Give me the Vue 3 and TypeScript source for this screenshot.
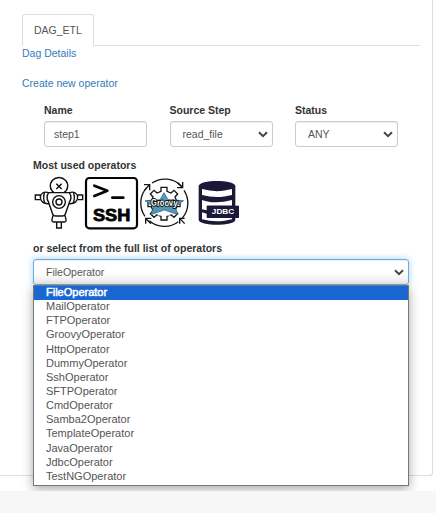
<script setup lang="ts">
import { ref } from 'vue'

const name = ref('step1')
const operator = ref('FileOperator')
const selects = [
  { label: 'Source Step', value: 'read_file' },
  { label: 'Status', value: 'ANY' },
]
const operators: string[] = [
  'FileOperator', 'MailOperator', 'FTPOperator', 'GroovyOperator', 'HttpOperator',
  'DummyOperator', 'SshOperator', 'SFTPOperator', 'CmdOperator', 'Samba2Operator',
  'TemplateOperator', 'JavaOperator', 'JdbcOperator', 'TestNGOperator',
]
</script>

<template>
  <div class="page">
    <main class="card">
      <nav class="tabs"><a class="tab">DAG_ETL</a></nav>
      <a class="link">Dag Details</a>
      <a class="link create">Create new operator</a>

      <div class="fields">
        <label class="field">
          <b>Name</b>
          <input v-model="name" class="control" type="text" />
        </label>
        <div v-for="s in selects" :key="s.label" class="field">
          <b>{{ s.label }}</b>
          <div class="control select">
            <span>{{ s.value }}</span>
            <svg class="chevron" viewBox="0 0 10 7"><path d="M1 1.3 5 5.1 9 1.3" /></svg>
          </div>
        </div>
      </div>

      <section class="operators">
        <b class="heading">Most used operators</b>
        <div class="icons">
          <svg class="icon" viewBox="9 15 159 159" fill="none" stroke="#111" stroke-width="4.2">
            <path d="M72 62a26 25 0 1 1 30 0" />
            <path d="m79 35 16 16M95 35 79 51" />
            <path d="M54 62H121M56 62c-6 9-6 19-1 27l13 37q2 6 8 6h22q6 0 8-6l13-37c5-8 5-18-1-27" />
            <circle cx="87" cy="90" r="19" />
            <circle cx="87" cy="90" r="9" />
            <path d="M56 62C41 57 31 65 31 76s10 21 26 19M118 62c15-5 25 3 25 14s-10 21-26 19" />
            <path d="M31 69H16v14h15M143 69h15v14h-15M44 61q-6 15 0 33M130 61q6 15 0 33" />
            <path d="m70 128-4 14q-1 8 6 8h30q7 0 6-8l-4-14M80 150v18h14v-18" />
          </svg>

          <svg class="icon" viewBox="9 15 159 159" fill="none" stroke="#050505" stroke-linecap="round" stroke-linejoin="round">
            <rect x="12" y="18" width="153" height="151" rx="10" stroke-width="6.5" />
            <path d="m37 41 39 15-39 16M91 77h33" stroke-width="8" />
            <text class="ssh" x="89" y="146" text-anchor="middle" textLength="112" lengthAdjust="spacingAndGlyphs">SSH</text>
          </svg>

          <svg class="icon" viewBox="9 15 159 159" fill="none" stroke="#151515" stroke-width="4">
            <path d="M51 33A69 69 0 0 1 139 42M147 55A69 69 0 0 1 142 138M130 149A69 69 0 0 1 43 146M30 133A69 69 0 0 1 35 47" />
            <path d="M27 38h17v17M43 39 28 55M143 30v17h-17M142 46 127 32M149 139h-15v16M135 140l14 15M32 155v-16h17M33 140l15 15" />
            <path d="M78 58V46h18v12l12 5 9-8 11 11-8 9 5 12h10v17h-10l-5 12 8 9-11 11-9-8-12 5v11H78v-11l-12-5-9 8-11-11 8-9-5-12H39V87h10l5-12-8-9 11-11 9 8z" />
            <path d="m87 62 12 21 47 3-26 19 9 23-41-14-41 14 9-23-26-19 45-3z" fill="#5298ba" stroke="#245f7c" stroke-width="2" />
            <path d="M66 128q21-15 42 0l-6 3q-15-6-30 0z" fill="#fff" stroke="none" />
            <text class="groovy" x="88" y="102" text-anchor="middle" textLength="78" lengthAdjust="spacingAndGlyphs" rotate="-5 4 -4 4 -3 5">Groovy</text>
          </svg>

          <svg class="icon" viewBox="3 15 159 159">
            <path d="M26 43c0-21 110-21 110 0v100c0 20-110 20-110 0z" fill="#1b1838" />
            <g fill="#fff">
              <path d="M36 51q45 13 90 0v18q-45 12-90 0zM36 84q10 4 20 5v12H50v14q-7-1-14-3zM36 121q7 3 14 4v12h76v5q-45 12-90 0z" />
              <path d="M54 89q36 5 72-5v17H54z" />
            </g>
            <path d="M52 101h95v37H52z" fill="#1b1838" />
            <text class="jdbc" x="99" y="126" text-anchor="middle" textLength="67" lengthAdjust="spacingAndGlyphs">JDBC</text>
          </svg>
        </div>

        <b class="heading full">or select from the full list of operators</b>
        <div class="combo">
          <div class="control select focused">
            <span>{{ operator }}</span>
            <svg class="chevron" viewBox="0 0 10 7"><path d="M1 1.3 5 5.1 9 1.3" /></svg>
          </div>
          <ul class="menu">
            <li v-for="o in operators" :key="o" :class="{ active: o === operator }" @click="operator = o">{{ o }}</li>
          </ul>
        </div>
      </section>
    </main>
  </div>
</template>

<style>
body {
  background: #f7f7f7;
  overflow: hidden;
}
</style>

<style scoped>
.page {
  box-sizing: border-box;
  height: 491px;
  padding-right: 3px;
  background: #fff;
  font: 10.5px/15px "Liberation Sans", Arial, sans-serif;
  color: #333;
}
.card {
  box-sizing: border-box;
  height: 476px;
  padding: 14px 12px 0 22px;
  border: solid #ddd;
  border-width: 0 1px 1px 0;
  border-radius: 0 0 3px 0;
}
.tabs {
  display: flex;
  height: 31px;
  border-bottom: 1px solid #ddd;
}
.tab {
  box-sizing: border-box;
  width: 72px;
  height: 32px;
  padding: 8px 0 0 11px;
  border: 1px solid #ddd;
  border-bottom: 0;
  border-radius: 3px 3px 0 0;
  background: #fff;
  color: #555;
}
.link {
  display: block;
  color: #337ab7;
}
.create {
  margin-top: 15px;
}
.fields {
  display: flex;
  gap: 22.5px;
  margin: 12px 0 0 22px;
}
.field {
  display: flex;
  flex-direction: column;
  gap: 3px;
  width: 103px;
}
.control {
  box-sizing: border-box;
  width: 100%;
  height: 26px;
  padding: 0 9px;
  border: 1px solid #ccc;
  border-radius: 3px;
  background: #fff;
  box-shadow: inset 0 1px 1px rgba(0, 0, 0, 0.075);
  color: #555;
  font: inherit;
  outline: none;
}
.select {
  display: flex;
  align-items: center;
  justify-content: space-between;
  padding: 0 4px 0 12px;
}
.chevron {
  width: 10px;
  height: 7px;
  fill: none;
  stroke: #444;
  stroke-width: 2;
}
.operators {
  margin: 11px 11px 0;
}
.heading {
  display: block;
}
.icons {
  display: flex;
  height: 53px;
  margin-top: 4px;
}
.icon {
  width: 53px;
  height: 53px;
  margin-right: -0.25px;
  overflow: visible;
}
.icon:first-child {
  margin-right: -1px;
}
.ssh {
  font: bold 52px "Liberation Sans", Arial, sans-serif;
  fill: #050505;
  stroke-width: 2.5;
}
.groovy {
  font: bold 29px "Liberation Sans", Arial, sans-serif;
  fill: #fff;
  stroke: #111;
  stroke-width: 6;
  paint-order: stroke;
}
.jdbc {
  font: bold 21px "Liberation Sans", Arial, sans-serif;
  fill: #fff;
}
.full {
  margin-top: 11px;
}
.combo {
  position: relative;
  margin-top: 3px;
}
.focused {
  border-color: #66afe9;
  background: linear-gradient(#fff 50%, #eee);
  box-shadow: inset 0 1px 1px rgba(0, 0, 0, 0.075), 0 0 6px rgba(102, 175, 233, 0.6);
}
.menu {
  position: absolute;
  top: 26px;
  left: 0;
  box-sizing: border-box;
  width: 100%;
  height: 201px;
  margin: 0;
  padding: 0;
  border: 1px solid #767676;
  background: #fff;
  box-shadow: 0 3px 10px rgba(0, 0, 0, 0.35);
  color: #555;
  font-size: 11px;
  list-style: none;
}
.menu li {
  height: 14.15px;
  padding-left: 12px;
  line-height: 13.5px;
}
.menu .active {
  background: #1967d2;
  color: #fff;
  -webkit-text-stroke: 0.5px #fff;
}
</style>
